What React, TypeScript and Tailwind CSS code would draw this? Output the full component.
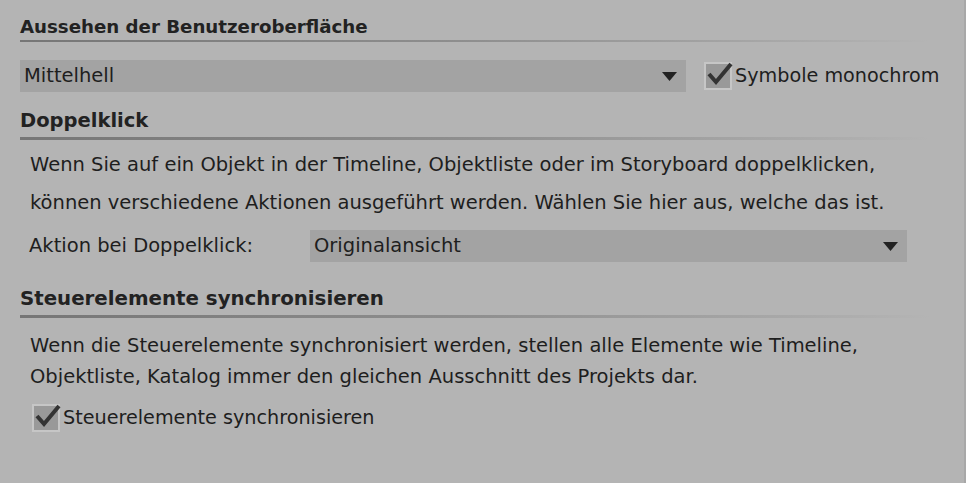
import React from "react";

function Heading({ title, thick, size }: { title: string; thick?: boolean; size: string }) {
  return (
    <div className="w-[910px]">
      <div className={`${size} font-bold leading-[22px] text-[#222]`}>{title}</div>
      <div
        className={`${thick ? "h-[3px] mt-[5px]" : "h-[2px] mt-[2px]"} bg-gradient-to-r from-[#767676] via-[#8f8f8f] to-[#b4b4b4]`}
      />
    </div>
  );
}

function Arrow() {
  return (
    <svg width="15" height="9" viewBox="0 0 15 9" className="shrink-0">
      <path d="M0 0 H15 L7.5 9 Z" fill="#222" />
    </svg>
  );
}

function Select({ value, className }: { value: string; className: string }) {
  return (
    <div className={`flex h-[32px] shrink-0 items-center justify-between bg-[#a3a3a3] pl-[4px] pr-[9px] ${className}`}>
      <span className="whitespace-nowrap text-[19.5px] text-[#1e1e1e]">{value}</span>
      <Arrow />
    </div>
  );
}

function Check({ label }: { label: string }) {
  return (
    <div className="flex items-center gap-[3px]">
      <div className="relative h-[28px] w-[28px] shrink-0 border-2 border-[#c6c6c6] bg-[#999]">
        <svg width="30" height="30" viewBox="0 0 30 30" className="absolute -left-[2px] -top-[4px]">
          <path d="M5 14 L12 22 L27 4" fill="none" stroke="#333" strokeWidth="4" strokeLinejoin="miter" />
        </svg>
      </div>
      <span className="whitespace-nowrap text-[19.2px] leading-[22px] text-[#1e1e1e]">{label}</span>
    </div>
  );
}

export default function App() {
  return (
    <div className="h-[483px] w-[966px] overflow-hidden border-r-2 border-[#a8a8a8] bg-[#b4b4b4] pl-[20px] pt-[16px] font-['DejaVu_Sans',sans-serif]">
      <Heading title="Aussehen der Benutzeroberfläche" size="text-[18.2px]" />
      <div className="mt-[18px] flex items-center">
        <Select value="Mittelhell" className="w-[666px]" />
        <div className="ml-[18px] shrink-0">
          <Check label="Symbole monochrom" />
        </div>
      </div>

      <div className="mt-[18px]">
        <Heading title="Doppelklick" thick size="text-[19.5px]" />
      </div>
      <div className="mt-[6px] whitespace-nowrap pl-[10px] text-[19.5px] leading-[38px] text-[#1e1e1e]">
        <div>Wenn Sie auf ein Objekt in der Timeline, Objektliste oder im Storyboard doppelklicken,</div>
        <div>können verschiedene Aktionen ausgeführt werden. Wählen Sie hier aus, welche das ist.</div>
      </div>
      <div className="mt-[8px] flex items-center pl-[9px]">
        <span className="w-[281px] shrink-0 whitespace-nowrap text-[19.5px] text-[#1e1e1e]">Aktion bei Doppelklick:</span>
        <Select value="Originalansicht" className="w-[597px]" />
      </div>

      <div className="mt-[26px]">
        <Heading title="Steuerelemente synchronisieren" thick size="text-[19.8px]" />
      </div>
      <div className="mt-[12px] whitespace-nowrap pl-[10px] text-[19.5px] leading-[31px] text-[#1e1e1e]">
        <div>Wenn die Steuerelemente synchronisiert werden, stellen alle Elemente wie Timeline,</div>
        <div>Objektliste, Katalog immer den gleichen Ausschnitt des Projekts dar.</div>
      </div>
      <div className="mt-[12px] pl-[12px]">
        <Check label="Steuerelemente synchronisieren" />
      </div>
    </div>
  );
}
